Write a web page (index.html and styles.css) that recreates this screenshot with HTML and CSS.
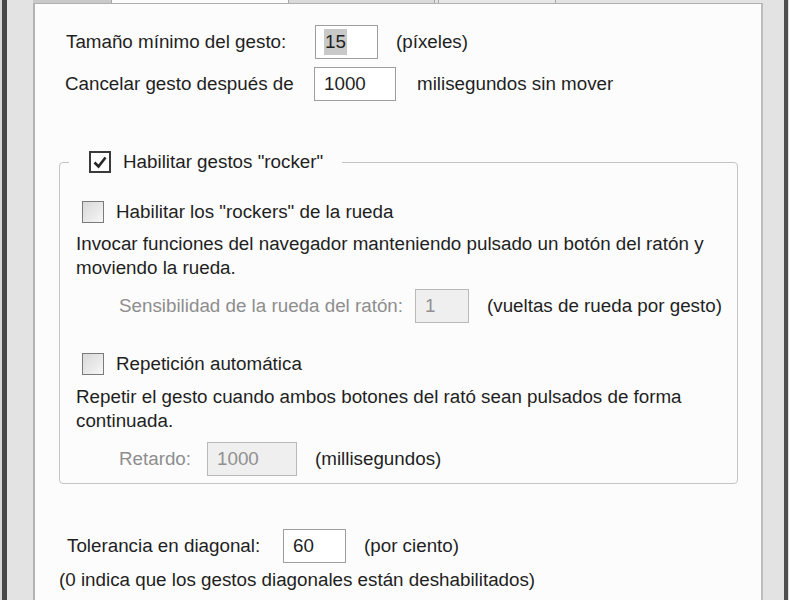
FILE: index.html
```html
<!DOCTYPE html>
<html lang="es">
<head>
<meta charset="utf-8">
<title>Gestos</title>
<link rel="stylesheet" href="styles.css">
</head>
<body>
<div class="window">
  <div class="edge-l"></div>
  <div class="frame-l"></div>
  <div class="gutter"></div>
  <div class="column">
    <div class="tabs">
      <div class="tab t1"></div>
      <div class="tab sel"></div>
      <div class="tab t3"></div>
      <div class="tab t4"></div>
      <div class="tab-rest"></div>
    </div>
    <div class="panel">
      <div class="row r1">
        <span class="label w-tam">Tamaño mínimo del gesto:</span>
        <span class="field f-small"><span class="sel-text">15</span></span>
        <span class="unit">(píxeles)</span>
      </div>
      <div class="row r2">
        <span class="label w-can">Cancelar gesto después de</span>
        <span class="field f-wide">1000</span>
        <span class="unit u-mili">milisegundos sin mover</span>
      </div>

      <fieldset class="group">
        <legend class="legend">
          <span class="check checked">
            <svg viewBox="0 0 22 22" width="22" height="22"><path d="M5.5 11.5 L9.5 15.5 L16.5 6.5" fill="none" stroke="#262626" stroke-width="2.6" stroke-linejoin="miter"/></svg>
          </span>
          <span class="legend-text">Habilitar gestos "rocker"</span>
        </legend>

        <div class="check-row cr1">
          <span class="check"></span>
          <span class="check-label">Habilitar los "rockers" de la rueda</span>
        </div>
        <p class="desc">Invocar funciones del navegador manteniendo pulsado un botón del ratón y moviendo la rueda.</p>
        <div class="row sub s1">
          <span class="label dim w-sens">Sensibilidad de la rueda del ratón:</span>
          <span class="field disabled f-one">1</span>
          <span class="unit">(vueltas de rueda por gesto)</span>
        </div>

        <div class="check-row cr2">
          <span class="check"></span>
          <span class="check-label">Repetición automática</span>
        </div>
        <p class="desc d2">Repetir el gesto cuando ambos botones del rató sean pulsados de forma continuada.</p>
        <div class="row sub s2">
          <span class="label dim w-ret">Retardo:</span>
          <span class="field disabled f-ret">1000</span>
          <span class="unit">(millisegundos)</span>
        </div>
      </fieldset>

      <div class="row r3">
        <span class="label w-tol">Tolerancia en diagonal:</span>
        <span class="field f-small">60</span>
        <span class="unit">(por ciento)</span>
      </div>
      <p class="note">(0 indica que los gestos diagonales están deshabilitados)</p>
    </div>
  </div>
  <div class="gutter gr"></div>
  <div class="frame-r"></div>
</div>
</body>
</html>
```

FILE: styles.css
```css
html, body {
  margin: 0;
  padding: 0;
  height: 600px;
  overflow: hidden;
  background: #e2e2e2;
}

body {
  font-family: "Liberation Sans", Arial, sans-serif;
  font-size: 18.8px;
  color: #1f1f1f;
}

.window {
  display: flex;
  height: 600px;
}

.edge-l { width: 2px; background: #d6d6d6; }
.frame-l { width: 5px; background: #474747; }
.gutter { width: 26px; background: #e3e3e3; }
.gutter.gr { width: 21px; }
.frame-r { width: 4px; background: #4f4f4f; }

.column {
  width: 730px;
  display: flex;
  flex-direction: column;
}

.tabs {
  display: flex;
  height: 3px;
}
.tab { height: 3px; }
.t1 { width: 78px; background: #c9c9c9; border-right: 1px solid #a8a8a8; }
.sel { width: 176px; background: #fbfbfb; }
.t3 { width: 145px; background: #dadada; border-left: 1px solid #a8a8a8; border-right: 1px solid #a8a8a8; }
.t4 { width: 116px; background: #e8e8e8; border-left: 1px solid #a8a8a8; border-right: 1px solid #a8a8a8; margin-left: 3px; }
.tab-rest { flex: 1; background: #e3e3e3; }

.panel {
  flex: 1;
  background: #fcfcfc;
  border-left: 2px solid #b3b3b3;
  border-right: 2px solid #bdbdbd;
  border-top: 1px solid #b0b0b0;
  padding: 21px 0 0 23px;
}

.row {
  display: flex;
  align-items: center;
  height: 34px;
  white-space: nowrap;
}
.r1 { padding-left: 8px; }
.r2 { margin-top: 8px; padding-left: 7px; }

.label { display: inline-block; }
.w-tam { width: 249px; }
.w-can { width: 249px; }
.w-sens { width: 296px; }
.w-ret { width: 88px; }
.w-tol { width: 216px; }

.dim { color: #8e8e8e; }

.field {
  box-sizing: border-box;
  height: 34px;
  display: inline-flex;
  align-items: center;
  border: 1px solid #9e9e9e;
  background: #fff;
  padding-left: 9px;
}
.f-small { width: 63px; }
.f-wide { width: 82px; }
.f-one { width: 54px; }
.f-ret { width: 90px; }
.field.disabled {
  background: #efefef;
  border-color: #b9b9b9;
  color: #909090;
}
.sel-text {
  background: #c9c9c9;
  padding: 2px 1px;
  margin-left: -1px;
}

.unit { margin-left: 18px; }
.u-mili { margin-left: 21px; }

.group {
  margin: 49px 0 0 1px;
  width: 679px;
  box-sizing: border-box;
  border: 1px solid #c4c4c4;
  border-radius: 4px;
  padding: 0 0 7px 0;
  min-width: 0;
}

.legend {
  display: flex;
  align-items: center;
  margin-left: 9px;
  padding: 0 19px 0 20px;
  height: 24px;
}
.legend-text { margin-left: 12px; white-space: nowrap; }

.check {
  box-sizing: border-box;
  width: 22px;
  height: 22px;
  border: 1px solid #7a7a7a;
  background: linear-gradient(135deg, #d9d9d9, #f6f6f6);
  display: inline-block;
  flex: none;
}
.check.checked {
  border: 2px solid #3a3a3a;
  background: #fdfdfd;
}
.check.checked svg { display: block; margin: -2px; }

.check-row {
  display: flex;
  align-items: center;
  height: 24px;
  padding-left: 22px;
}
.cr1 { margin-top: 26px; }
.cr2 { margin-top: 29px; }
.check-label { margin-left: 12px; white-space: nowrap; }

.desc {
  margin: 8px 0 0 16px;
  line-height: 24px;
  width: 660px;
}
.d2 { margin-top: 9px; }

.sub { padding-left: 59px; }
.s1 { margin-top: 9px; }
.s2 { margin-top: 9px; }

.r3 { margin-top: 45px; padding-left: 9px; }

.note {
  margin: 5px 0 0 1px;
  line-height: 24px;
  white-space: nowrap;
}
```
